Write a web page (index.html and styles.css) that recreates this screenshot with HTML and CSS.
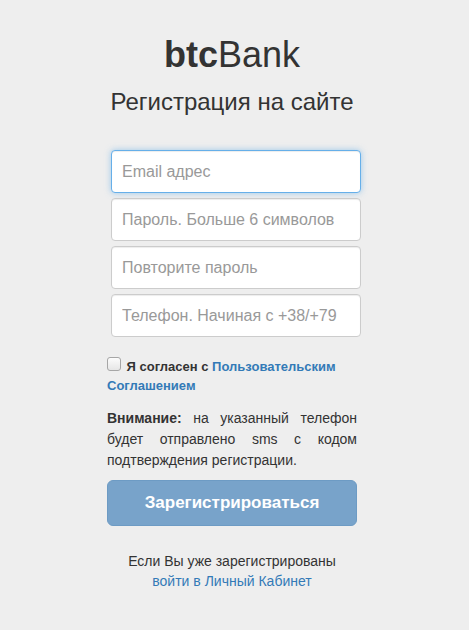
FILE: index.html
```html
<!DOCTYPE html>
<html lang="ru">
<head>
<meta charset="utf-8">
<link rel="stylesheet" href="styles.css">
</head>
<body>
<div class="wrap">
  <div class="form">
    <h1 class="logo"><b>btc</b>Bank</h1>
    <h2 class="title">Регистрация на сайте</h2>
    <div class="fields">
      <input class="field focus" type="text" placeholder="Email адрес">
      <input class="field" type="text" placeholder="Пароль. Больше 6 символов">
      <input class="field" type="text" placeholder="Повторите пароль">
      <input class="field" type="text" placeholder="Телефон. Начиная с +38/+79">
    </div>
    <label class="agree"><span class="box"></span> Я согласен с <a href="#">Пользовательским Соглашением</a></label>
    <p class="note"><b>Внимание:</b> на указанный телефон будет отправлено sms с кодом подтверждения регистрации.</p>
    <button class="btn">Зарегистрироваться</button>
    <p class="foot">Если Вы уже зарегистрированы<br><a href="#">войти в Личный Кабинет</a></p>
  </div>
</div>
</body>
</html>
```
FILE: styles.css
```css
html, body { margin: 0; padding: 0; }
body {
  background: #eeeeee;
  font-family: "Liberation Sans", Arial, sans-serif;
  color: #333;
  font-size: 14px;
  line-height: 1.42857;
}
.wrap {
  display: flex;
  justify-content: center;
  padding-right: 5px;
}
.form {
  width: 250px;
  display: flex;
  flex-direction: column;
}
.logo {
  margin: 33px 0 0;
  font-size: 36px;
  line-height: 44px;
  font-weight: normal;
  text-align: center;
  color: #333;
}
.logo b { font-weight: bold; }
.title {
  margin: 10px -20px 0;
  font-size: 24px;
  line-height: 30px;
  font-weight: normal;
  text-align: center;
  color: #333;
}
.fields {
  margin: 33px 0 0 4px;
  display: flex;
  flex-direction: column;
  gap: 5px;
}
.field {
  box-sizing: border-box;
  width: 250px;
  height: 43px;
  padding: 0 10px;
  border: 1px solid #ccc;
  border-radius: 4px;
  background: #fff;
  font-family: "Liberation Sans", Arial, sans-serif;
  font-size: 16px;
  color: #555;
  box-shadow: inset 0 1px 1px rgba(0,0,0,0.075);
  outline: none;
}
.field::placeholder { color: #999; }
.field.focus {
  border-color: #66afe9;
  box-shadow: inset 0 1px 1px rgba(0,0,0,.075), 0 0 6px rgba(102,175,233,.6);
}
.agree {
  margin-top: 20px;
  font-size: 13px;
  font-weight: bold;
  line-height: 19px;
  color: #333;
}
.agree a { color: #337ab7; text-decoration: none; }
.box {
  display: inline-block;
  width: 12px;
  height: 12px;
  border: 1px solid #a6a6a6;
  border-radius: 3px;
  background: linear-gradient(#fcfcfc, #e6e6e6);
  vertical-align: 0px;
  margin-right: 2px;
}
.note {
  margin: 13px 0 0;
  text-align: justify;
  font-size: 14px;
  line-height: 21px;
  color: #333;
}
.btn {
  margin-top: 9px;
  height: 46px;
  width: 250px;
  border: 1px solid #6d9bc4;
  border-radius: 6px;
  background: #78a3ca;
  color: #fff;
  font-family: "Liberation Sans", Arial, sans-serif;
  font-size: 17px;
  font-weight: bold;
}
.foot {
  margin: 25px 0 0;
  text-align: center;
  font-size: 14px;
  line-height: 20px;
  color: #333;
}
.foot a { color: #337ab7; text-decoration: none; }
```
